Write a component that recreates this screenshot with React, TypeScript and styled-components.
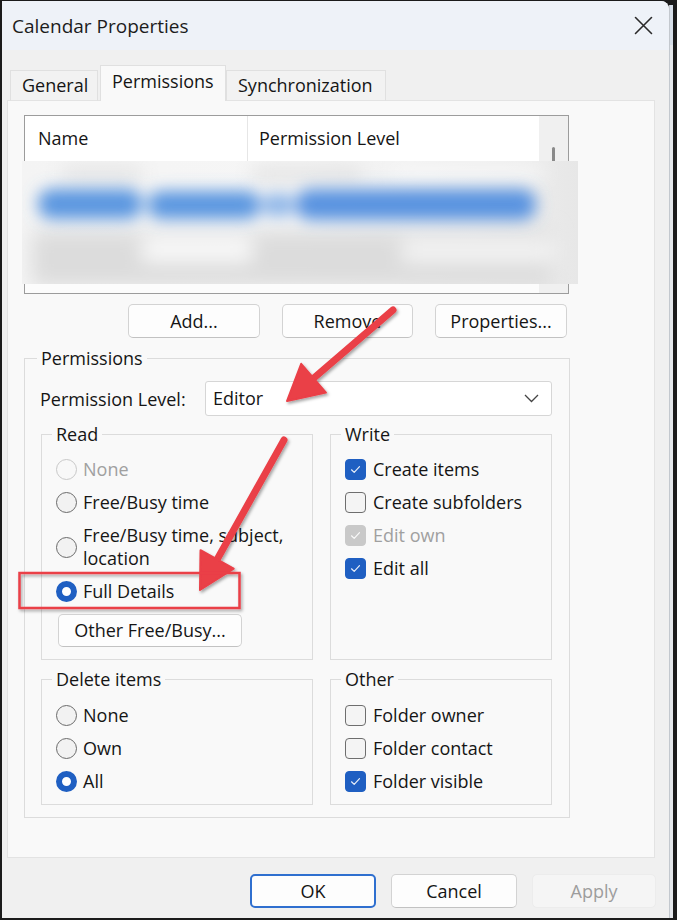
import React from "react";
import styled, { createGlobalStyle, css } from "styled-components";

const GlobalStyle = createGlobalStyle`
  html, body { margin: 0; padding: 0; background: #1b1b1b; }
  body { font-family: "Open Sans", "Noto Sans", "DejaVu Sans", sans-serif; color: #151515; }
  * { box-sizing: border-box; }
`;

const Page = styled.div`
  position: relative;
  width: 677px;
  height: 920px;
  background: #1b1b1b;
  display: flex;
  padding: 1px 0 2px 2px;
  overflow: hidden;
`;

const Window = styled.div`
  width: 667px;
  height: 100%;
  background: #f0f0f0;
  border-top-right-radius: 8px;
  display: flex;
  flex-direction: column;
  overflow: hidden;
`;

const BehindStrip = styled.div`
  width: 4px;
  margin-top: 4px;
  background: linear-gradient(#d6dee8 0 40px, #e4e7eb 40px);
  border-left: 1px solid #c3c8ce;
`;

const TitleBar = styled.div`
  height: 49px;
  flex: none;
  background: #eef2f8;
  display: flex;
  align-items: center;
  justify-content: space-between;
  padding: 0 16px 0 10px;
`;

const Title = styled.span`
  font-size: 19px;
  color: #1c1c1c;
`;

const TabStrip = styled.div`
  display: flex;
  align-items: flex-end;
  height: 35px;
  margin: 15px 0 0 8px;
  position: relative;
  z-index: 1;
`;

const Tab = styled.div<{ $active?: boolean; $w: number }>`
  width: ${(p) => p.$w}px;
  height: ${(p) => (p.$active ? 36 : 31)}px;
  margin-bottom: -1px;
  margin-left: ${(p) => (p.$active ? 2 : 0)}px;
  border: 1px solid #e0e0e0;
  border-bottom: ${(p) => (p.$active ? "none" : "1px solid #e3e3e3")};
  background: ${(p) => (p.$active ? "#f9f9f9" : "#f2f2f2")};
  display: flex;
  align-items: center;
  padding: ${(p) => (p.$active ? "0 0 5px 11px" : "0 0 1px 11px")};
  font-size: 18px;
  color: #151515;
  white-space: nowrap;
`;

const Pane = styled.div`
  margin: 0 14px 0 5px;
  height: 758px;
  flex: none;
  background: #f9f9f9;
  border: 1px solid #e3e3e3;
  padding: 14px 0 0 16px;
  display: flex;
  flex-direction: column;
`;

const List = styled.div`
  position: relative;
  width: 545px;
  height: 179px;
  border: 1px solid #9c9c9c;
  background: #fcfcfc;
  display: flex;
`;

const ListMain = styled.div`
  flex: 1;
  display: flex;
  flex-direction: column;
`;

const ListHeader = styled.div`
  height: 45px;
  background: #ffffff;
  display: grid;
  grid-template-columns: 222px 1fr;
`;

const HeaderCell = styled.div<{ $divider?: boolean }>`
  display: flex;
  align-items: center;
  padding-left: ${(p) => (p.$divider ? 11 : 13)}px;
  padding-bottom: 2px;
  font-size: 18px;
  color: #151515;
  border-left: ${(p) => (p.$divider ? "1px solid #e6e6e6" : "none")};
`;

const ScrollBar = styled.div`
  width: 29px;
  background: #f0f0f0;
  display: flex;
  justify-content: center;
  padding-top: 31px;
`;

const Thumb = styled.div`
  width: 3px;
  height: 40px;
  border-radius: 2px;
  background: #8a8a8a;
`;

const Redaction = styled.svg`
  position: absolute;
  left: -3px;
  top: 45px;
`;

const ButtonRow = styled.div`
  width: 543px;
  display: flex;
  justify-content: flex-end;
  gap: 22px;
  margin-top: 10px;
`;

const Button = styled.button<{ $w: number; $h?: number; $default?: boolean; $disabled?: boolean }>`
  width: ${(p) => p.$w}px;
  height: ${(p) => p.$h ?? 34}px;
  font-family: inherit;
  font-size: 18px;
  color: #151515;
  background: #fdfdfd;
  border: 1px solid #d3d3d3;
  border-bottom-color: #c2c2c2;
  border-radius: 5px;
  padding: 0 0 1px;
  ${(p) =>
    p.$default &&
    css`
      border: 2px solid #2f6fcf;
    `}
  ${(p) =>
    p.$disabled &&
    css`
      background: #f5f5f5;
      border: 1px solid #ececec;
      color: #9d9d9d;
    `}
`;

const Group = styled.fieldset<{ $pad: string }>`
  margin: 0;
  min-width: 0;
  border: 1px solid #dcdcdc;
  padding: ${(p) => p.$pad};
`;

const Legend = styled.legend`
  padding: 0 4px;
  margin-left: -4px;
  font-size: 18px;
  line-height: 24px;
  color: #151515;
`;

const PermGroup = styled(Group)`
  width: 546px;
  margin-top: 8px;
`;

const LevelRow = styled.div`
  display: flex;
  align-items: center;
  margin-left: -1px;
`;

const LevelLabel = styled.span`
  width: 165px;
  font-size: 18px;
`;

const Select = styled.div`
  width: 347px;
  height: 35px;
  background: #ffffff;
  border: 1px solid #d6d6d6;
  border-radius: 3px;
  display: flex;
  align-items: center;
  justify-content: space-between;
  padding: 0 12px 1px 7px;
  font-size: 18px;
`;

const Columns = styled.div<{ $mt: number }>`
  display: grid;
  grid-template-columns: 272px 222px;
  column-gap: 17px;
  margin-top: ${(p) => p.$mt}px;
`;

const OptionList = styled.div<{ $pt: number }>`
  display: flex;
  flex-direction: column;
  padding-top: ${(p) => p.$pt}px;
`;

const Option = styled.div<{ $disabled?: boolean; $gap: number }>`
  display: flex;
  align-items: center;
  gap: ${(p) => p.$gap}px;
  padding: 5px 0;
  line-height: 23px;
  font-size: 18px;
  color: ${(p) => (p.$disabled ? "#a0a0a0" : "#151515")};
`;

const Radio = styled.span<{ $checked?: boolean; $disabled?: boolean }>`
  flex: none;
  width: 21px;
  height: 21px;
  border-radius: 50%;
  ${(p) =>
    p.$checked
      ? css`
          background: #ffffff;
          border: 6px solid #1f5fc2;
        `
      : css`
          background: ${p.$disabled ? "#f8f8f8" : "#f2f2f2"};
          border: 1.5px solid ${p.$disabled ? "#c8c8c8" : "#6b6b6b"};
        `}
`;

const Check = styled.span<{ $checked?: boolean; $disabled?: boolean }>`
  flex: none;
  width: 21px;
  height: 21px;
  border-radius: 4px;
  display: flex;
  align-items: center;
  justify-content: center;
  ${(p) =>
    p.$checked
      ? css`
          background: ${p.$disabled ? "#c9c9c9" : "#1f5fc2"};
          border: 1px solid ${p.$disabled ? "#c9c9c9" : "#1f5fc2"};
        `
      : css`
          background: #f4f4f4;
          border: 1.5px solid #6e6e6e;
        `}
`;

const SmallButtonWrap = styled.div`
  padding: 6px 0 0 2px;
`;

const Footer = styled.div`
  display: flex;
  justify-content: flex-end;
  gap: 15px;
  padding: 16px 13px 0 0;
`;

const Annotations = styled.svg`
  position: absolute;
  left: 0;
  top: 0;
  pointer-events: none;
`;

const CheckMark = () => (
  <svg width="13" height="11" viewBox="0 0 13 11">
    <path d="M2.5 5.8 L5.2 8.4 L10.5 2.6" fill="none" stroke="rgba(255,255,255,0.9)" strokeWidth="1.2" strokeLinecap="round" strokeLinejoin="round" />
  </svg>
);

const RadioItem = ({ label, checked, disabled }: { label: React.ReactNode; checked?: boolean; disabled?: boolean }) => (
  <Option $gap={6} $disabled={disabled}>
    <Radio $checked={checked} $disabled={disabled} />
    <span>{label}</span>
  </Option>
);

const CheckItem = ({ label, checked, disabled }: { label: string; checked?: boolean; disabled?: boolean }) => (
  <Option $gap={7} $disabled={disabled}>
    <Check $checked={checked} $disabled={disabled}>{checked && <CheckMark />}</Check>
    <span>{label}</span>
  </Option>
);

function arrow(tx: number, ty: number, hx: number, hy: number, len: number, half: number) {
  const dx = hx - tx;
  const dy = hy - ty;
  const l = Math.hypot(dx, dy);
  const ux = dx / l;
  const uy = dy / l;
  const px = -uy;
  const py = ux;
  const bx = hx - ux * len;
  const by = hy - uy * len;
  const head = `${hx},${hy} ${bx + px * half},${by + py * half} ${bx - px * half},${by - py * half}`;
  return { shaft: { x1: tx, y1: ty, x2: bx + ux * 4, y2: by + uy * 4 }, head };
}

export default function App() {
  const a1 = arrow(393, 310, 287, 401, 35, 19);
  const a2 = arrow(284, 440, 200, 590, 35, 19);
  return (
    <>
      <GlobalStyle />
      <Page>
        <Window>
          <TitleBar>
            <Title>Calendar Properties</Title>
            <svg width="19" height="19" viewBox="0 0 19 19">
              <path d="M1.5 1.5 L17.5 17.5 M17.5 1.5 L1.5 17.5" stroke="#2a2a2a" strokeWidth="1.6" strokeLinecap="round" />
            </svg>
          </TitleBar>
          <TabStrip>
            <Tab $w={88}>General</Tab>
            <Tab $w={126} $active>Permissions</Tab>
            <Tab $w={160}>Synchronization</Tab>
          </TabStrip>
          <Pane>
            <List>
              <ListMain>
                <ListHeader>
                  <HeaderCell>Name</HeaderCell>
                  <HeaderCell $divider>Permission Level</HeaderCell>
                </ListHeader>
              </ListMain>
              <ScrollBar>
                <Thumb />
              </ScrollBar>
              <Redaction width="556" height="123" viewBox="0 0 556 123">
                <defs>
                  <linearGradient id="rg" x1="0" x2="1" y1="0" y2="0">
                    <stop offset="0" stopColor="#f4f4f4" />
                    <stop offset="0.5" stopColor="#f6f6f6" />
                    <stop offset="0.9" stopColor="#ececec" />
                    <stop offset="1" stopColor="#e7e7e7" />
                  </linearGradient>
                  <filter id="bl" x="-10%" y="-60%" width="120%" height="220%">
                    <feGaussianBlur stdDeviation="8" />
                  </filter>
                  <filter id="bl2" x="-10%" y="-60%" width="120%" height="220%">
                    <feGaussianBlur stdDeviation="10" />
                  </filter>
                </defs>
                <rect width="556" height="123" fill="url(#rg)" />
                <g filter="url(#bl2)">
                  <rect x="10" y="70" width="520" height="55" fill="#dcdcdc" />
                  <rect x="120" y="78" width="110" height="22" fill="#fbfbfb" />
                  <rect x="380" y="80" width="150" height="20" fill="#f6f6f6" />
                  <rect x="40" y="6" width="80" height="14" fill="#e2e2e2" />
                  <rect x="230" y="6" width="110" height="14" fill="#e0e0e0" />
                  <rect x="370" y="6" width="150" height="12" fill="#fbfbfb" />
                </g>
                <g filter="url(#bl)">
                  <rect x="16" y="28" width="104" height="30" rx="14" fill="#5a96e0" />
                  <rect x="126" y="30" width="112" height="28" rx="13" fill="#5a96e0" />
                  <rect x="240" y="33" width="32" height="22" rx="10" fill="#8ab4e8" />
                  <rect x="274" y="28" width="240" height="31" rx="14" fill="#5893e0" />
                </g>
              </Redaction>
            </List>
            <ButtonRow>
              <Button $w={132}>Add...</Button>
              <Button $w={131}>Remove</Button>
              <Button $w={132}>Properties...</Button>
            </ButtonRow>
            <PermGroup $pad="11px 16px 12px 16px">
              <Legend>Permissions</Legend>
              <LevelRow>
                <LevelLabel>Permission Level:</LevelLabel>
                <Select>
                  <span>Editor</span>
                  <svg width="15" height="9" viewBox="0 0 15 9">
                    <path d="M1 1 L7.5 7.5 L14 1" fill="none" stroke="#444" strokeWidth="1.3" />
                  </svg>
                </Select>
              </LevelRow>
              <Columns $mt={6}>
                <Group $pad="0 0 12px 14px">
                  <Legend>Read</Legend>
                  <OptionList $pt={7}>
                    <RadioItem label="None" disabled />
                    <RadioItem label="Free/Busy time" />
                    <RadioItem label={<>Free/Busy time, subject,<br />location</>} />
                    <RadioItem label="Full Details" checked />
                    <SmallButtonWrap>
                      <Button $w={184} $h={33}>Other Free/Busy...</Button>
                    </SmallButtonWrap>
                  </OptionList>
                </Group>
                <Group $pad="0 0 12px 14px">
                  <Legend>Write</Legend>
                  <OptionList $pt={7}>
                    <CheckItem label="Create items" checked />
                    <CheckItem label="Create subfolders" />
                    <CheckItem label="Edit own" checked disabled />
                    <CheckItem label="Edit all" checked />
                  </OptionList>
                </Group>
              </Columns>
              <Columns $mt={7}>
                <Group $pad="0 0 6px 14px">
                  <Legend>Delete items</Legend>
                  <OptionList $pt={8}>
                    <RadioItem label="None" />
                    <RadioItem label="Own" />
                    <RadioItem label="All" checked />
                  </OptionList>
                </Group>
                <Group $pad="0 0 6px 14px">
                  <Legend>Other</Legend>
                  <OptionList $pt={8}>
                    <CheckItem label="Folder owner" />
                    <CheckItem label="Folder contact" />
                    <CheckItem label="Folder visible" checked />
                  </OptionList>
                </Group>
              </Columns>
            </PermGroup>
          </Pane>
          <Footer>
            <Button $w={126} $default>OK</Button>
            <Button $w={126}>Cancel</Button>
            <Button $w={124} $disabled>Apply</Button>
          </Footer>
        </Window>
        <BehindStrip />
        <Annotations width="677" height="920" viewBox="0 0 677 920">
          <defs>
            <filter id="sh" x="-20%" y="-20%" width="140%" height="140%">
              <feDropShadow dx="1.5" dy="2" stdDeviation="1.8" floodColor="#000" floodOpacity="0.35" />
            </filter>
          </defs>
          <g filter="url(#sh)" fill="#ea3f47" stroke="#ea3f47">
            <line {...a1.shaft} strokeWidth="7" strokeLinecap="round" />
            <polygon points={a1.head} strokeWidth="2" strokeLinejoin="round" />
            <line {...a2.shaft} strokeWidth="7" strokeLinecap="round" />
            <polygon points={a2.head} strokeWidth="2" strokeLinejoin="round" />
            <rect x="19.5" y="573" width="220" height="35" fill="none" strokeWidth="2.5" />
          </g>
        </Annotations>
      </Page>
    </>
  );
}
